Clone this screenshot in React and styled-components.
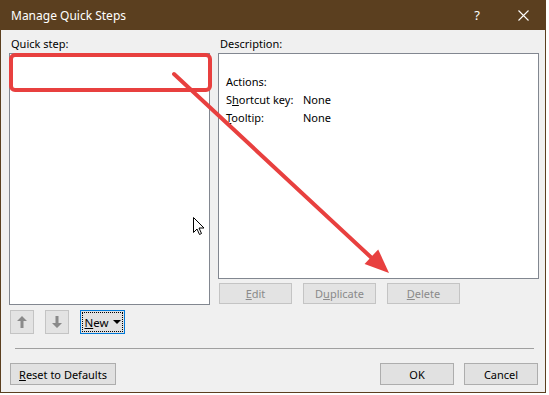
import React from "react";
import styled, { createGlobalStyle } from "styled-components";

const GlobalStyle = createGlobalStyle`
  html, body {
    margin: 0;
    padding: 0;
    background: #ffffff;
  }
  body {
    font-family: "Noto Sans", "Segoe UI", sans-serif;
    font-size: 11px;
    color: #000;
  }
`;

const Stage = styled.div`
  position: relative;
  width: 549px;
  height: 395px;
  overflow: hidden;
`;

const Window = styled.section`
  box-sizing: border-box;
  width: 546px;
  height: 393px;
  display: flex;
  flex-direction: column;
  background: #f0f0f0;
  border: 1px solid #5b3f1f;
  border-top: none;
`;

const TitleBar = styled.header`
  height: 30px;
  margin: 0 -1px;
  flex: none;
  display: flex;
  align-items: center;
  background: #5b3f1f;
  color: #ffffff;
  font-size: 12px;
  padding-left: 11px;

  .title {
    flex: 1;
  }

  .help {
    width: 46px;
    text-align: center;
    font-size: 13px;
  }

  .close {
    width: 46px;
    display: flex;
    justify-content: center;
  }
`;

const Body = styled.div`
  flex: 1;
  display: flex;
  flex-direction: column;
  padding: 6px 7px 0 8px;
`;

const Columns = styled.div`
  display: grid;
  grid-template-columns: 201px 321px;
  column-gap: 8px;
`;

const Column = styled.div`
  display: flex;
  flex-direction: column;
`;

const Label = styled.div`
  height: 16px;
  line-height: 16px;
  margin: 0 0 1px 2px;
`;

const Box = styled.div`
  box-sizing: border-box;
  height: ${(p) => p.$height}px;
  background: #ffffff;
  border: 1px solid #828790;
  padding: ${(p) => p.$padding || "0"};
`;

const InfoRow = styled.div`
  display: grid;
  grid-template-columns: 77px 1fr;
  height: 18px;
  line-height: 18px;
`;

const ButtonRow = styled.div`
  display: flex;
  gap: ${(p) => p.$gap}px;
  margin-top: ${(p) => p.$top}px;
  padding-left: ${(p) => p.$left || 0}px;
`;

const Button = styled.div`
  box-sizing: border-box;
  width: ${(p) => p.$width}px;
  height: ${(p) => p.$height || 21}px;
  display: flex;
  align-items: center;
  justify-content: center;
  background: ${(p) => (p.$disabled ? "#e3e3e3" : "#e1e1e1")};
  border: 1px solid ${(p) => (p.$disabled ? "#c4c4c4" : "#adadad")};
  color: ${(p) => (p.$disabled ? "#8a8a8a" : "#000")};
  font-size: 11px;
`;

const FocusButton = styled.div`
  box-sizing: border-box;
  width: 45px;
  height: 24px;
  padding: 1px;
  border: 1px solid #0078d7;
  background: #e1e1e1;
  font-size: 11.5px;

  .inner {
    box-sizing: border-box;
    height: 100%;
    border: 1px dotted #000;
    display: flex;
    align-items: center;
    justify-content: center;
    gap: 4px;
  }
`;

const Caret = styled.span`
  width: 0;
  height: 0;
  border-left: 4px solid transparent;
  border-right: 4px solid transparent;
  border-top: 4px solid #000;
`;

const Separator = styled.hr`
  margin: 14px 4px 0 6px;
  border: none;
  border-top: 1px solid #a0a0a0;
  height: 0;
`;

const Footer = styled.div`
  display: flex;
  align-items: center;
  gap: 10px;
  margin-top: 14px;
  padding-left: 1px;

  .spacer {
    flex: 1;
  }
`;

const Overlay = styled.svg`
  position: absolute;
  left: 0;
  top: 0;
  pointer-events: none;
`;

const Key = ({ children }) => <u>{children}</u>;

const ArrowIcon = ({ up }) => (
  <svg width="10" height="12" viewBox="0 0 10 12">
    <g transform={up ? "" : "rotate(180 5 6)"} fill="#8a8a8a">
      <path d="M5 0 L10 5 L6.5 5 L6.5 12 L3.5 12 L3.5 5 L0 5 Z" />
    </g>
  </svg>
);

export default function App() {
  return (
    <>
      <GlobalStyle />
      <Stage>
        <Window>
          <TitleBar>
            <span className="title">Manage Quick Steps</span>
            <span className="help">?</span>
            <span className="close">
              <svg width="11" height="11" viewBox="0 0 11 11">
                <path d="M0.5 0.5 L10.5 10.5 M10.5 0.5 L0.5 10.5" stroke="#fff" strokeWidth="1.1" />
              </svg>
            </span>
          </TitleBar>
          <Body>
            <Columns>
              <Column>
                <Label>Quick step:</Label>
                <Box $height={252} />
                <ButtonRow $gap={11} $top={5} $left={1}>
                  <Button $width={24} $height={24} $disabled>
                    <ArrowIcon up />
                  </Button>
                  <Button $width={24} $height={24} $disabled>
                    <ArrowIcon />
                  </Button>
                  <FocusButton>
                    <div className="inner">
                      <span>
                        <Key>N</Key>ew
                      </span>
                      <Caret />
                    </div>
                  </FocusButton>
                </ButtonRow>
              </Column>
              <Column>
                <Label>Description:</Label>
                <Box $height={226} $padding="19px 0 0 7px">
                  <InfoRow>
                    <span>Actions:</span>
                    <span />
                  </InfoRow>
                  <InfoRow>
                    <span>
                      S<Key>h</Key>ortcut key:
                    </span>
                    <span>None</span>
                  </InfoRow>
                  <InfoRow>
                    <span>
                      <Key>T</Key>ooltip:
                    </span>
                    <span>None</span>
                  </InfoRow>
                </Box>
                <ButtonRow $gap={11} $top={4} $left={1}>
                  <Button $width={73} $disabled>
                    <span>
                      <Key>E</Key>dit
                    </span>
                  </Button>
                  <Button $width={73} $disabled>
                    <span>
                      D<Key>u</Key>plicate
                    </span>
                  </Button>
                  <Button $width={73} $disabled>
                    <span>
                      <Key>D</Key>elete
                    </span>
                  </Button>
                </ButtonRow>
              </Column>
            </Columns>
            <Separator />
            <Footer>
              <Button $width={106} $height={22}>
                <span>
                  <Key>R</Key>eset to Defaults
                </span>
              </Button>
              <span className="spacer" />
              <Button $width={74} $height={22}>OK</Button>
              <Button $width={74} $height={22}>Cancel</Button>
            </Footer>
          </Body>
        </Window>
        <Overlay width="549" height="395" viewBox="0 0 549 395">
          <rect x="11" y="55" width="199" height="35" rx="4" fill="none" stroke="#e8403f" strokeWidth="4" />
          <line x1="174" y1="74" x2="375" y2="261" stroke="#e8403f" strokeWidth="4" strokeLinecap="round" />
          <polygon points="389,273 364.6,264 378.2,249.4" fill="#e8403f" />
          <path
            d="M193.5 217.5 L193.5 232.5 L197 229 L199.5 234.5 L201.5 233.5 L199 228 L204 228 Z"
            fill="#fff"
            stroke="#000"
            strokeWidth="1"
          />
        </Overlay>
      </Stage>
    </>
  );
}
